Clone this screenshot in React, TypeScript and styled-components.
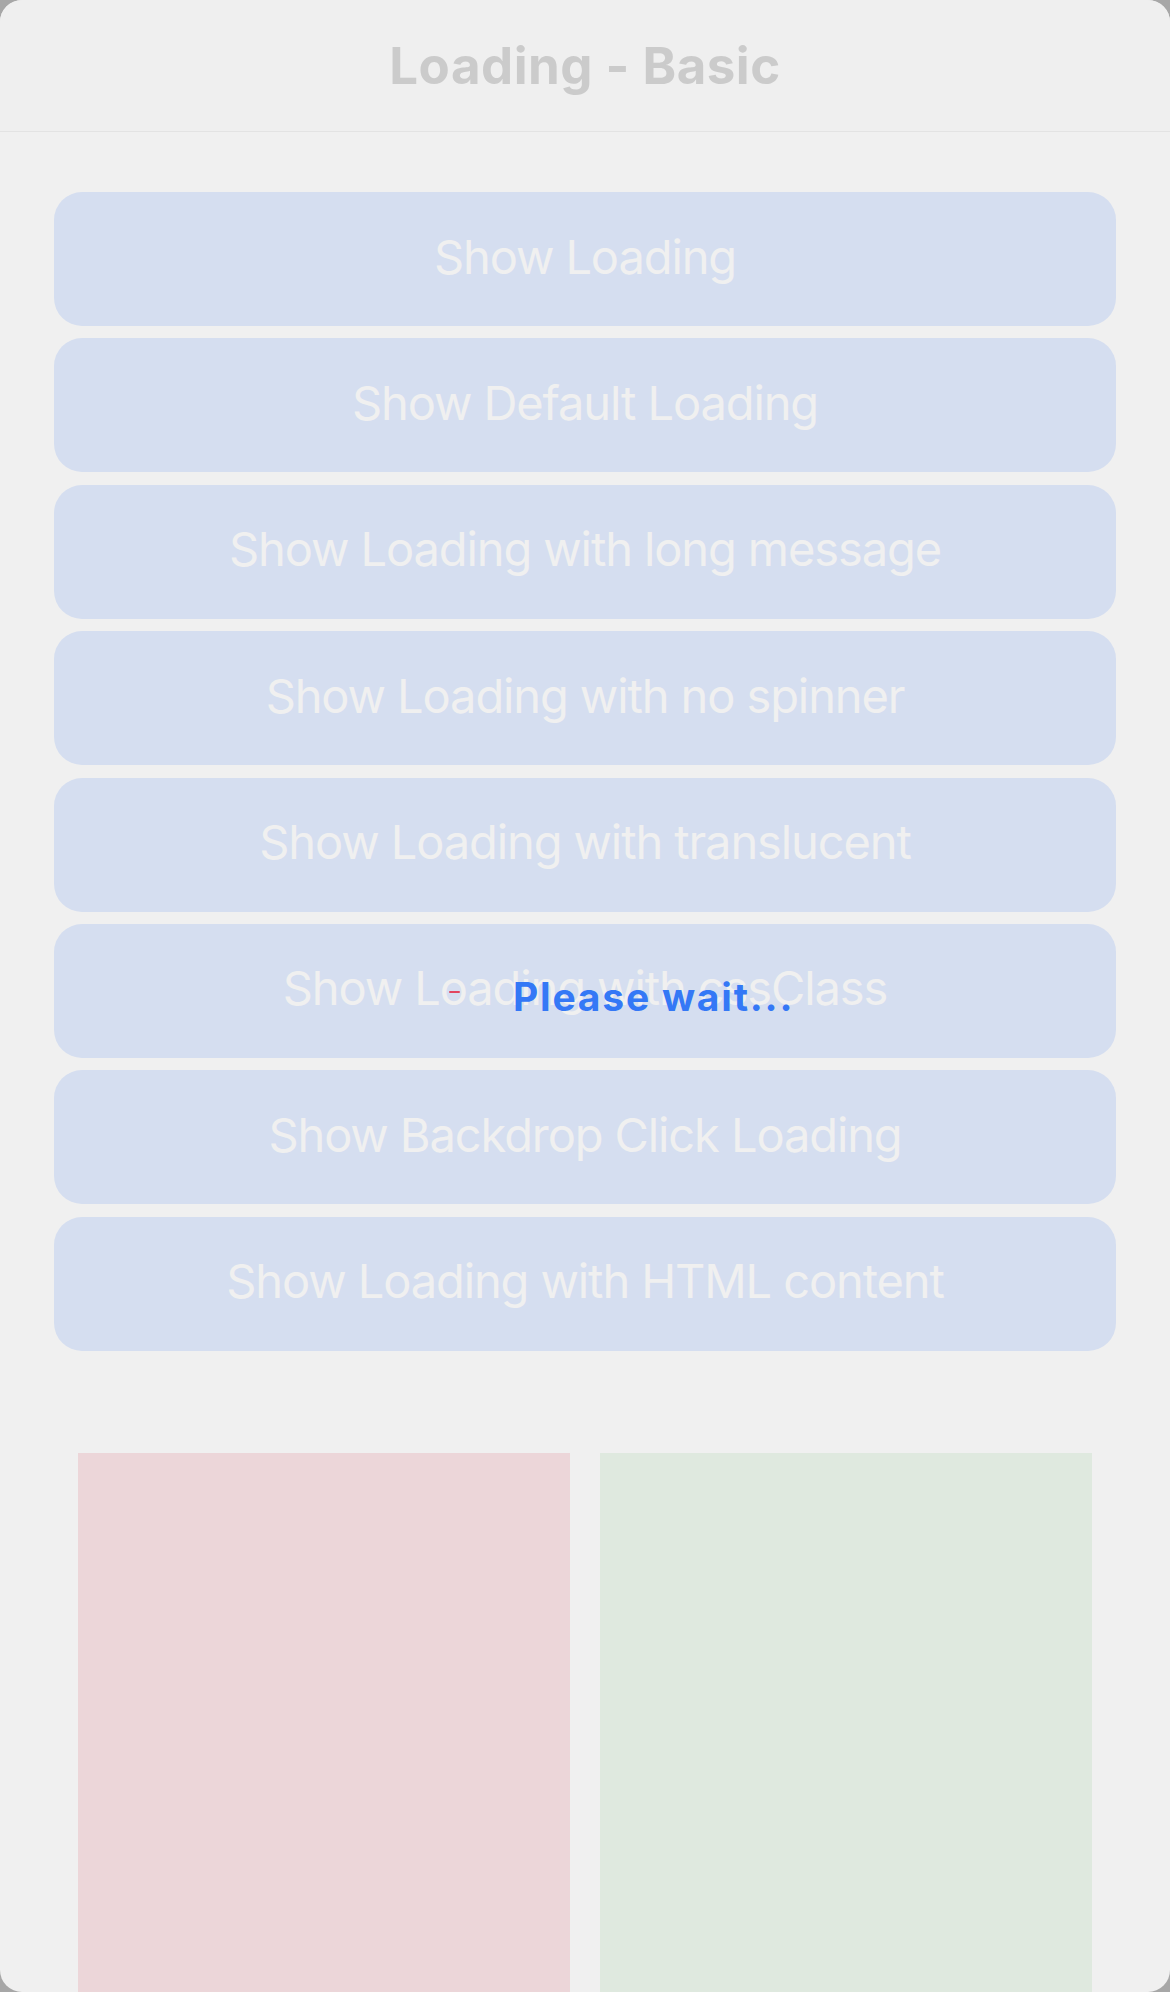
import React from "react";
import styled, { createGlobalStyle } from "styled-components";

const GlobalStyle = createGlobalStyle`
  html, body {
    margin: 0;
    padding: 0;
    background: #a7a7a7;
  }
  * { box-sizing: border-box; }
`;

const Frame = styled.div`
  position: relative;
  width: 1170px;
  height: 1992px;
  border-radius: 22px;
  background: #f0f0f0;
  overflow: hidden;
  display: flex;
  flex-direction: column;
  font-family: Inter, "Noto Sans", sans-serif;
`;

const Header = styled.header`
  flex: 0 0 auto;
  height: 132px;
  border-bottom: 1px solid #e3e3e3;
  background: #efefef;
  display: flex;
  align-items: center;
  justify-content: center;
`;

const Title = styled.h1`
  margin: 0;
  font-size: 51px;
  font-weight: 700;
  color: #cbcbcb;
  letter-spacing: 0.5px;
`;

const Content = styled.main`
  flex: 1 1 auto;
  display: flex;
  flex-direction: column;
  padding: 60px 54px 0;
`;

const ButtonList = styled.div`
  display: flex;
  flex-direction: column;
  gap: 12.4px;
`;

const ActionButton = styled.button`
  height: 134px;
  border: none;
  border-radius: 28px;
  background: #d5def0;
  color: #f0f0f0;
  font-family: Inter, "Noto Sans", sans-serif;
  font-size: 47px;
  font-weight: 400;
  letter-spacing: -1.1px;
  display: flex;
  align-items: center;
  justify-content: center;
  padding: 0 0 6px;
`;

const Boxes = styled.div`
  flex: 1 1 auto;
  margin-top: 102px;
  padding: 0 24px;
  display: grid;
  grid-template-columns: 492px 492px;
  justify-content: center;
  column-gap: 30px;
`;

const Box = styled.div<{ $tone: "red" | "green" }>`
  background: ${(p) => (p.$tone === "red" ? "#ecd6d9" : "#dfe9df")};
`;

const LoadingOverlay = styled.div`
  position: absolute;
  left: 449px;
  top: 977px;
  display: flex;
  align-items: center;
  pointer-events: none;
`;

const SpinnerDash = styled.span`
  display: block;
  width: 11px;
  height: 2px;
  background: #e2455f;
  border-radius: 1px;
  margin-top: -9px;
  margin-right: 53px;
`;

const Message = styled.span`
  font-family: Inter, "Noto Sans", sans-serif;
  font-size: 39px;
  line-height: 39px;
  font-weight: 700;
  color: #3478f6;
  letter-spacing: 1.8px;
  white-space: nowrap;
`;

const labels = [
  "Show Loading",
  "Show Default Loading",
  "Show Loading with long message",
  "Show Loading with no spinner",
  "Show Loading with translucent",
  "Show Loading with cssClass",
  "Show Backdrop Click Loading",
  "Show Loading with HTML content",
];

export default function App() {
  return (
    <>
      <GlobalStyle />
      <Frame>
        <Header>
          <Title>Loading - Basic</Title>
        </Header>
        <Content>
          <ButtonList>
            {labels.map((l) => (
              <ActionButton key={l}>{l}</ActionButton>
            ))}
          </ButtonList>
          <Boxes>
            <Box $tone="red" />
            <Box $tone="green" />
          </Boxes>
        </Content>
        <LoadingOverlay>
          <SpinnerDash />
          <Message>Please wait...</Message>
        </LoadingOverlay>
      </Frame>
    </>
  );
}
